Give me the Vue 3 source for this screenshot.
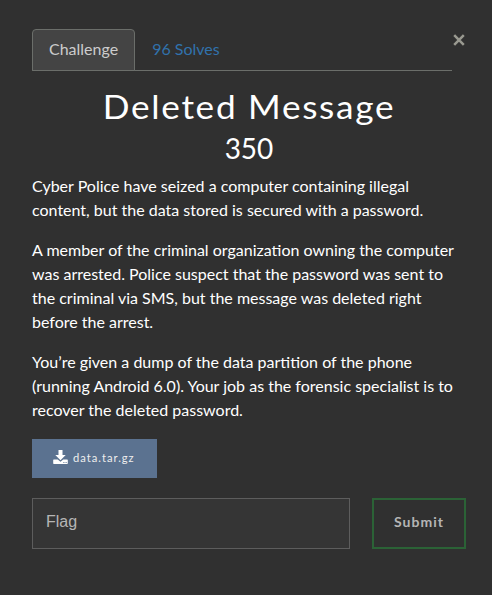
<script setup>
const paragraphs = [
  ['Cyber Police have seized a computer containing illegal', 'content, but the data stored is secured with a password.'],
  ['A member of the criminal organization owning the computer', 'was arrested. Police suspect that the password was sent to', 'the criminal via SMS, but the message was deleted right', 'before the arrest.'],
  ['You’re given a dump of the data partition of the phone', '(running Android 6.0). Your job as the forensic specialist is to', 'recover the deleted password.']
]
</script>

<template>
  <main class="modal">
    <header class="top">
      <nav class="tabs">
        <a class="tab active">Challenge</a>
        <a class="tab">96 Solves</a>
      </nav>
      <button class="close" aria-label="Close">
        <svg viewBox="0 0 14 14" width="14" height="14"><path d="M2.2 2.2 L11.8 11.8 M11.8 2.2 L2.2 11.8" /></svg>
      </button>
    </header>
    <h2 class="title">Deleted Message</h2>
    <h3 class="value">350</h3>
    <section class="description">
      <p v-for="(lines, i) in paragraphs" :key="i">
        <span v-for="line in lines" :key="line" class="line">{{ line }}</span>
      </p>
    </section>
    <a class="file">
      <svg class="download" viewBox="0 0 15 14" width="15" height="14">
        <path d="M5.500 0h4v5h3.200L7.500 10.200 2.300 5h3.200z" />
        <path d="M.8 9.400h4l2.700 2.400 2.700-2.400h4q.6 0 .6.600v3.300q0 .7-.6.700H.8q-.6 0-.6-.7V10q0-.6.600-.6z" />
        <path class="dot" d="M10.400 12.100h1v.8h-1zM12.600 12.100h1v.8h-1z" />
      </svg>
      <span>data.tar.gz</span>
    </a>
    <form class="answer" @submit.prevent>
      <input class="flag" type="text" placeholder="Flag" />
      <button class="submit" type="submit">Submit</button>
    </form>
  </main>
</template>

<style>
body { background: #303030; }
</style>

<style scoped>
.modal {
  box-sizing: border-box;
  height: 595px;
  padding: 29px 26px 0 32px;
  background: #303030;
  color: #fff;
  font: 16px/24px Lato, sans-serif;
}
.top { display: flex; }
.tabs {
  display: flex;
  width: 420px;
  height: 41px;
  border-bottom: 1px solid #6b6e6a;
}
.tab {
  box-sizing: border-box;
  height: 42px;
  padding: 7px 16px;
  border: 1px solid transparent;
  color: #3072ac;
}
.active {
  background: #444;
  border-color: #6b6e6a;
  border-radius: 4px 4px 0 0;
  color: #ccc;
}
.close {
  display: flex;
  width: 14px;
  height: 14px;
  margin-top: 4px;
  padding: 0;
  border: 0;
  background: none;
}
.close path { fill: none; stroke: #999990; stroke-width: 2.5; }
.title {
  margin: 17px 0 0;
  font-size: 32px;
  line-height: 38px;
  font-weight: 400;
  letter-spacing: 1.55px;
  text-align: center;
  white-space: nowrap;
  transform: scaleX(1.1);
}
.value {
  margin: 3px 0 0;
  font-size: 28px;
  line-height: 38px;
  font-weight: 400;
  text-align: center;
}
.description { margin-top: 7px; }
.description p { margin: 0 0 16px; }
.line { display: block; white-space: nowrap; }
.file {
  box-sizing: border-box;
  display: flex;
  align-items: center;
  width: 125px;
  height: 39px;
  margin-top: 17px;
  padding: 0 0 2px 21px;
  gap: 5px;
  background: #5b7290;
  color: #eee;
  font-size: 11.200px;
  letter-spacing: 1px;
}
.download { margin-bottom: 1px; fill: #fff; }
.dot { fill: #5b7290; }
.answer { display: flex; justify-content: space-between; margin-top: 20px; }
.flag {
  box-sizing: border-box;
  width: 318px;
  height: 51px;
  padding: 0 13px 4px;
  border: 1px solid #5d5d5d;
  border-radius: 0;
  background: #353535;
  color: #b5b5b5;
  font: 16px "Liberation Sans", sans-serif;
}
.flag::placeholder { color: #b5b5b5; }
.submit {
  box-sizing: border-box;
  width: 94px;
  height: 51px;
  padding: 0 0 4px;
  border: 2px solid #2b6236;
  background: transparent;
  color: #b5b5b5;
  font: 700 14px Lato, sans-serif;
  letter-spacing: 1px;
}
</style>
